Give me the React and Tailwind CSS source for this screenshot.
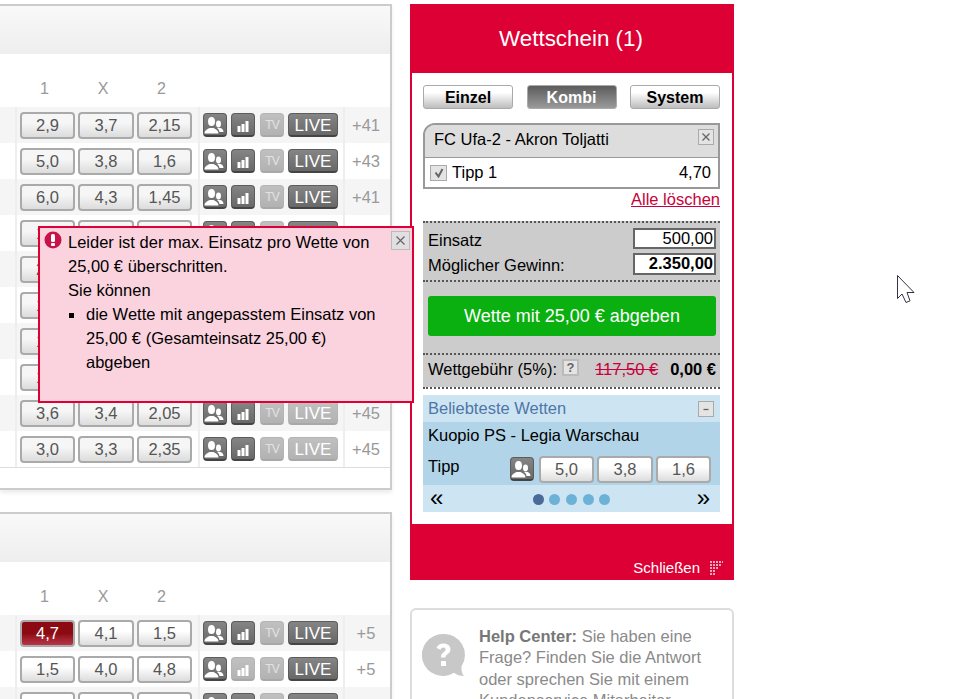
const card1Rows = [
  { odds: ["2,9", "3,7", "2,15"], more: "+41" },
  { odds: ["5,0", "3,8", "1,6"], more: "+43" },
  { odds: ["6,0", "4,3", "1,45"], more: "+41" },
  { odds: ["1,9", "3,5", "3,6"], more: "+41" },
  { odds: ["2,4", "3,4", "2,6"], more: "+41" },
  { odds: ["1,8", "3,5", "4,0"], more: "+43" },
  { odds: ["1,7", "3,6", "4,4"], more: "+43" },
  { odds: ["1,6", "3,8", "4,8"], more: "+45" },
  { odds: ["3,6", "3,4", "2,05"], more: "+45", liveOff: true },
  { odds: ["3,0", "3,3", "2,35"], more: "+45", liveOff: true },
];

const card2Rows = [
  { odds: ["4,7", "4,1", "1,5"], more: "+5", selected: true },
  { odds: ["1,5", "4,0", "4,8"], more: "+5", statsOff: true },
  { odds: ["2,1", "3,4", "3,2"], more: "+5" },
];

function PeopleGlyph() {
  return (
    <svg width="24" height="24" viewBox="0 0 24 24" fill="#fff" className="shrink-0">
      <ellipse cx="8.500" cy="8.500" rx="3.500" ry="4.500" />
      <path d="M1.500 20.500c0-3 2.500-4 5-5.500h4c2.500 1.500 5 2.500 5 5.500z" />
      <ellipse cx="15.500" cy="11" rx="2.500" ry="3.400" />
      <path d="M14 15h3.500c1.500.5 3 1.500 3 4h-4c-.2-1.500-1-3-2.500-4z" />
    </svg>
  );
}

function BarsGlyph() {
  return (
    <svg width="24" height="24" viewBox="0 0 24 24" fill="#fff" className="shrink-0">
      <rect x="6.500" y="13" width="3" height="6" />
      <rect x="10.500" y="11" width="3" height="8" />
      <rect x="14.500" y="8" width="3" height="11" />
    </svg>
  );
}

function IconTile({ off, children, className = "" }) {
  return (
    <div
      className={[
        "flex h-6 w-6 shrink-0 items-center justify-center overflow-hidden rounded-[4px] border border-b-2",
        off
          ? "border-[#b4b4b4] border-b-[#a8a8a8] bg-gradient-to-b from-[#c0c0c0] to-[#b2b2b2]"
          : "border-[#5c5c5c] border-b-[#444] bg-gradient-to-b from-[#858585] to-[#686868]",
        className,
      ].join(" ")}
    >
      {children}
    </div>
  );
}

function OddButton({ value, selected, bright, className = "" }) {
  const tone = selected
    ? "bg-gradient-to-b from-[#8c0a12] from-50% to-[#b8344a] text-white"
    : bright
      ? "bg-gradient-to-b from-white from-40% to-[#dcdcdc] text-[#555]"
      : "bg-gradient-to-b from-[#f6f6f6] from-40% to-[#dcdcdc] text-[#555]";

  return (
    <div
      className={[
        "flex h-[27px] items-center justify-center rounded-[4px] border-2 border-[#aaa] text-[16.500px] leading-none",
        tone,
        className,
      ].join(" ")}
    >
      {value}
    </div>
  );
}

function MatchRow({ row, shaded, bright }) {
  return (
    <div className={`flex h-9 ${shaded ? "bg-[#f5f5f5]" : "bg-white"}`}>
      <div className="w-[15px] shrink-0" />
      <div className="flex items-center gap-[3px] border-l-2 border-[#eee] pt-px pr-[6px] pl-[3px]">
        <OddButton value={row.odds[0]} selected={row.selected} bright={bright} className="w-[55px]" />
        <OddButton value={row.odds[1]} bright={bright} className="w-[56px]" />
        <OddButton value={row.odds[2]} bright={bright} className="w-[55px]" />
      </div>
      <div className="flex items-center border-l-2 border-[#eee] pr-[5px] pl-[3px]">
        <IconTile>
          <PeopleGlyph />
        </IconTile>
        <IconTile off={row.statsOff} className="ml-1">
          <BarsGlyph />
        </IconTile>
        <IconTile off className="ml-[5px]">
          <span className="text-[12px] leading-none tracking-[-1px] text-[#e2e2e2]">TV</span>
        </IconTile>
        <div
          className={[
            "ml-1 flex h-6 w-[50px] items-center justify-center rounded-[4px] border border-b-2 pt-px text-[17px] leading-none text-white",
            row.liveOff
              ? "border-[#b4b4b4] border-b-[#a8a8a8] bg-gradient-to-b from-[#c0c0c0] to-[#b2b2b2]"
              : "border-[#5c5c5c] border-b-[#444] bg-gradient-to-b from-[#858585] to-[#686868]",
          ].join(" ")}
        >
          LIVE
        </div>
      </div>
      <div className="flex flex-1 items-center justify-center border-l-2 border-[#eee] pr-[3px] text-[16.500px] text-[#999]">
        {row.more}
      </div>
    </div>
  );
}

function MarketCard({ rows, bright, className = "" }) {
  return (
    <section
      className={`border-y-2 border-r-2 border-[#ccc] bg-white shadow-[0_3px_4px_rgba(0,0,0,0.08)] ${className}`}
    >
      <div className="h-12 bg-gradient-to-b from-[#f9f9f9] to-[#eeeeee]" />
      <div className="flex h-[53px] items-end pb-2 pl-[17px] text-base leading-[20px] text-[#999]">
        <span className="w-[55px] text-center">1</span>
        <span className="ml-[3px] w-[56px] text-center">X</span>
        <span className="ml-[3px] w-[55px] text-center">2</span>
      </div>
      {rows.map((row, index) => (
        <MatchRow key={index} row={row} shaded={index % 2 === 0} bright={bright} />
      ))}
      <div className="h-[21px] border-t border-[#ddd]" />
    </section>
  );
}

function TypeTab({ label, active }) {
  return (
    <div
      className={[
        "flex h-6 w-[90px] items-center justify-center rounded-[3px] border border-[#aaa] pt-px text-base leading-none font-bold",
        active
          ? "bg-gradient-to-b from-[#5c5c5c] to-[#9a9a9a] text-white"
          : "bg-gradient-to-b from-white from-30% to-[#bdbdbd] text-black",
      ].join(" ")}
    >
      {label}
    </div>
  );
}

function SmallBox({ mark, className = "" }) {
  return (
    <div
      className={`flex h-4 w-4 shrink-0 items-center justify-center border border-[#aaa] bg-[#e4e4e4] ${className}`}
    >
      <svg width="10" height="10" viewBox="0 0 10 10" stroke="#666" strokeWidth="1.300" fill="none">
        {mark === "x" && <path d="M1.500 1.500l7 7M8.500 1.500l-7 7" />}
        {mark === "minus" && <path d="M2.500 5.500h5" />}
        {mark === "check" && <path d="M1.500 4.500l3 4L8.500 1" strokeWidth="2" />}
      </svg>
    </div>
  );
}

function Betslip() {
  return (
    <aside className="w-[324px]">
      <div className="flex h-[69px] items-center justify-center bg-[#dc0035] pt-px pr-[2px] text-[22.400px] text-white">
        Wettschein (1)
      </div>

      <div className="h-[451px] border-x-2 border-[#dc0035] bg-white pt-3 pr-3 pl-[11px]">
        <div className="flex justify-between">
          <TypeTab label="Einzel" />
          <TypeTab label="Kombi" active />
          <TypeTab label="System" />
        </div>

        <div className="mt-[14px] overflow-hidden rounded-tl-[12px] border-2 border-[#999]">
          <div className="flex h-8 items-center justify-between bg-[#ddd] pr-1 pb-1 pl-[9px] text-[16.500px] text-black">
            FC Ufa-2 - Akron Toljatti
            <SmallBox mark="x" className="mb-1" />
          </div>
          <div className="flex h-[30px] items-center border-t border-[#999] pr-[7px] pl-[5px] text-[16.500px] text-black">
            <SmallBox mark="check" className="w-[17px]" />
            <span className="ml-[5px]">Tipp 1</span>
            <span className="ml-auto">4,70</span>
          </div>
        </div>

        <div className="text-right text-[16.500px] leading-[20px] text-[#c8003c] underline">Alle löschen</div>

        <div className="mt-[12px] border-t-2 border-dotted border-[#555] bg-[#ccc] text-[16.500px] text-black">
          <div className="h-[59px] border-b-2 border-dotted border-[#555] pt-[5px] pr-1 pl-[5px]">
            <div className="flex h-[21px] items-center justify-between">
              <span className="mt-[3px]">Einsatz</span>
              <div className="h-[21px] w-[83px] border-2 border-[#666] bg-white pr-px text-right leading-[17px]">
                500,00
              </div>
            </div>
            <div className="mt-1 flex h-[22px] items-center justify-between">
              <span className="mt-[3px]">Möglicher Gewinn:</span>
              <div className="h-[22px] w-[83px] border-2 border-[#666] bg-white pr-px text-right leading-[17px] font-bold">
                2.350,00
              </div>
            </div>
          </div>
          <div className="h-[73px] border-b-2 border-dotted border-[#555] pt-[14px] pr-1 pl-[5px]">
            <div className="flex h-10 items-center justify-center rounded-[3px] bg-[#09b00f] text-[18px] text-white">
              Wette mit 25,00 € abgeben
            </div>
          </div>
          <div className="flex h-8 items-center pr-1 pb-1 pl-[5px]">
            Wettgebühr (5%):
            <span className="mb-1 ml-[5px] flex h-[17px] w-[17px] items-center justify-center border-2 border-[#bbb] bg-[#e4e4e4] text-[13px] leading-none font-bold text-[#666]">
              ?
            </span>
            <span className="ml-auto text-[#c8003c] line-through">117,50 €</span>
            <span className="ml-3 font-bold">0,00 €</span>
          </div>
        </div>

        <div className="h-[2px] border-t-2 border-dotted border-[#555]" />

        <div className="mt-[6px] bg-[#cde5f3] text-[16.500px]">
          <div className="flex h-[27px] items-center justify-between pr-[6px] pl-[5px] text-[#4f76a8]">
            Beliebteste Wetten
            <SmallBox mark="minus" />
          </div>
          <div className="h-[63px] bg-[#b2d4e8] pr-[9px] pl-[5px] text-black">
            <div className="flex h-[27px] items-center">Kuopio PS - Legia Warschau</div>
            <div className="mt-[5px] flex items-center">
              <span className="mb-[6px]">Tipp</span>
              <IconTile className="mr-[5px] ml-auto">
                <PeopleGlyph />
              </IconTile>
              <OddButton value="5,0" bright className="w-[55px]" />
              <OddButton value="3,8" bright className="ml-[3px] w-[56px]" />
              <OddButton value="1,6" bright className="ml-[3px] w-[55px]" />
            </div>
          </div>
          <div className="flex h-[27px] items-center justify-between pr-[10px] pl-[7px] text-[24px] leading-none text-black">
            <span className="mb-[2px]">«</span>
            <div className="mt-px ml-[3px] flex gap-[5.600px]">
              <span className="h-[11px] w-[11px] rounded-full bg-[#4a6a9a]" />
              <span className="h-[11px] w-[11px] rounded-full bg-[#6cb2d6]" />
              <span className="h-[11px] w-[11px] rounded-full bg-[#6cb2d6]" />
              <span className="h-[11px] w-[11px] rounded-full bg-[#6cb2d6]" />
              <span className="h-[11px] w-[11px] rounded-full bg-[#6cb2d6]" />
            </div>
            <span className="mb-[2px]">»</span>
          </div>
        </div>
      </div>

      <div className="flex h-14 items-end justify-end bg-[#dc0035] pr-[11px] pb-[4px] text-[15px] leading-[17px] text-white">
        Schließen
        <svg width="13" height="14" viewBox="0 0 13 14" fill="#f3a9bd" className="mb-px ml-[10px]">
          <path d="M0 0h2v2H0zM3 0h2v2H3zM6 0h2v2H6zM9 0h2v2H9zM12 0h1v2h-1zM0 3h2v2H0zM3 3h2v2H3zM6 3h2v2H6zM9 3h2v2H9zM0 6h2v2H0zM3 6h2v2H3zM6 6h2v2H6zM0 9h2v2H0zM3 9h2v2H3zM0 12h2v2H0zM3 12h2v2H3z" />
        </svg>
      </div>

      <div className="mt-7 flex rounded-[6px] border-2 border-[#ddd] pt-4 pr-3 pl-[10px] text-[16.500px] leading-[21.300px] text-[#8a8a8a]">
        <svg width="44" height="44" viewBox="0 0 44 44" className="mt-2 shrink-0">
          <path d="M21 0a21 21 0 1 0 11 38.800c3 2.400 6 3 10 3.200-2-2.500-2.800-5-2.500-9.500A21 21 0 0 0 21 0z" fill="#c8c8c8" />
          <path
            d="M14.500 14c1-3 3.500-4.500 7-4.500 4 0 7 2.300 7 5.800 0 2.700-1.600 4-3.300 5.200-1.300.9-1.700 1.500-1.700 3h-4.500c0-2.800.8-4 2.600-5.300 1.300-1 2-1.600 2-2.700 0-1.200-1-2-2.300-2-1.400 0-2.200.8-2.700 2.200zM19 27h5v5h-5z"
            fill="#fff"
          />
        </svg>
        <p className="ml-[13px]">
          <b className="text-[#777]">Help Center:</b> Sie haben eine Frage? Finden Sie die Antwort oder sprechen Sie
          mit einem Kundenservice Mitarbeiter.
        </p>
      </div>
    </aside>
  );
}

function LimitPopup() {
  return (
    <div className="absolute top-[226px] left-[38px] h-[177px] w-[376px] border-2 border-[#dc0035] bg-[#fbd3df] pt-[2px] pr-[27px] pl-[28px] text-[16.500px] leading-6 text-black">
      <svg width="18" height="18" viewBox="0 0 18 18" className="absolute top-[3px] left-[4px]">
        <circle cx="9" cy="9" r="8.500" fill="#c8134a" />
        <rect x="7" y="3" width="4" height="8" rx="1.500" fill="#fff" />
        <rect x="7" y="12" width="4" height="3" rx="1" fill="#fff" />
      </svg>
      <div className="absolute top-[3px] right-[2px] flex h-[19px] w-[19px] items-center justify-center border border-[#bbb] bg-[#e2dfe2]">
        <svg width="11" height="11" viewBox="0 0 11 11" stroke="#666" strokeWidth="1.200">
          <path d="M1.500 1.500l8 8M9.500 1.500l-8 8" />
        </svg>
      </div>
      <p>Leider ist der max. Einsatz pro Wette von 25,00 € überschritten.</p>
      <p>Sie können</p>
      <div className="flex">
        <span className="mt-[11px] mr-3 ml-px h-[5px] w-[5px] shrink-0 bg-black" />
        <p>die Wette mit angepasstem Einsatz von 25,00 € (Gesamteinsatz 25,00 €) abgeben</p>
      </div>
    </div>
  );
}

export default function App() {
  return (
    <div className="relative h-[699px] overflow-hidden bg-white pt-1 font-['Liberation_Sans',Arial,sans-serif]">
      <div className="flex items-start gap-[18px]">
        <div className="w-[392px] shrink-0">
          <MarketCard rows={card1Rows} />
          <MarketCard rows={card2Rows} bright className="mt-[22px]" />
        </div>
        <Betslip />
      </div>

      <LimitPopup />

      <svg width="20" height="30" viewBox="0 0 20 30" className="absolute top-[275px] left-[897px]">
        <path d="M.5.500V23.500L5 19l4 8.500 4-1.700L10 17.500h7z" fill="#fff" stroke="#334" strokeWidth="1" />
      </svg>
    </div>
  );
}
